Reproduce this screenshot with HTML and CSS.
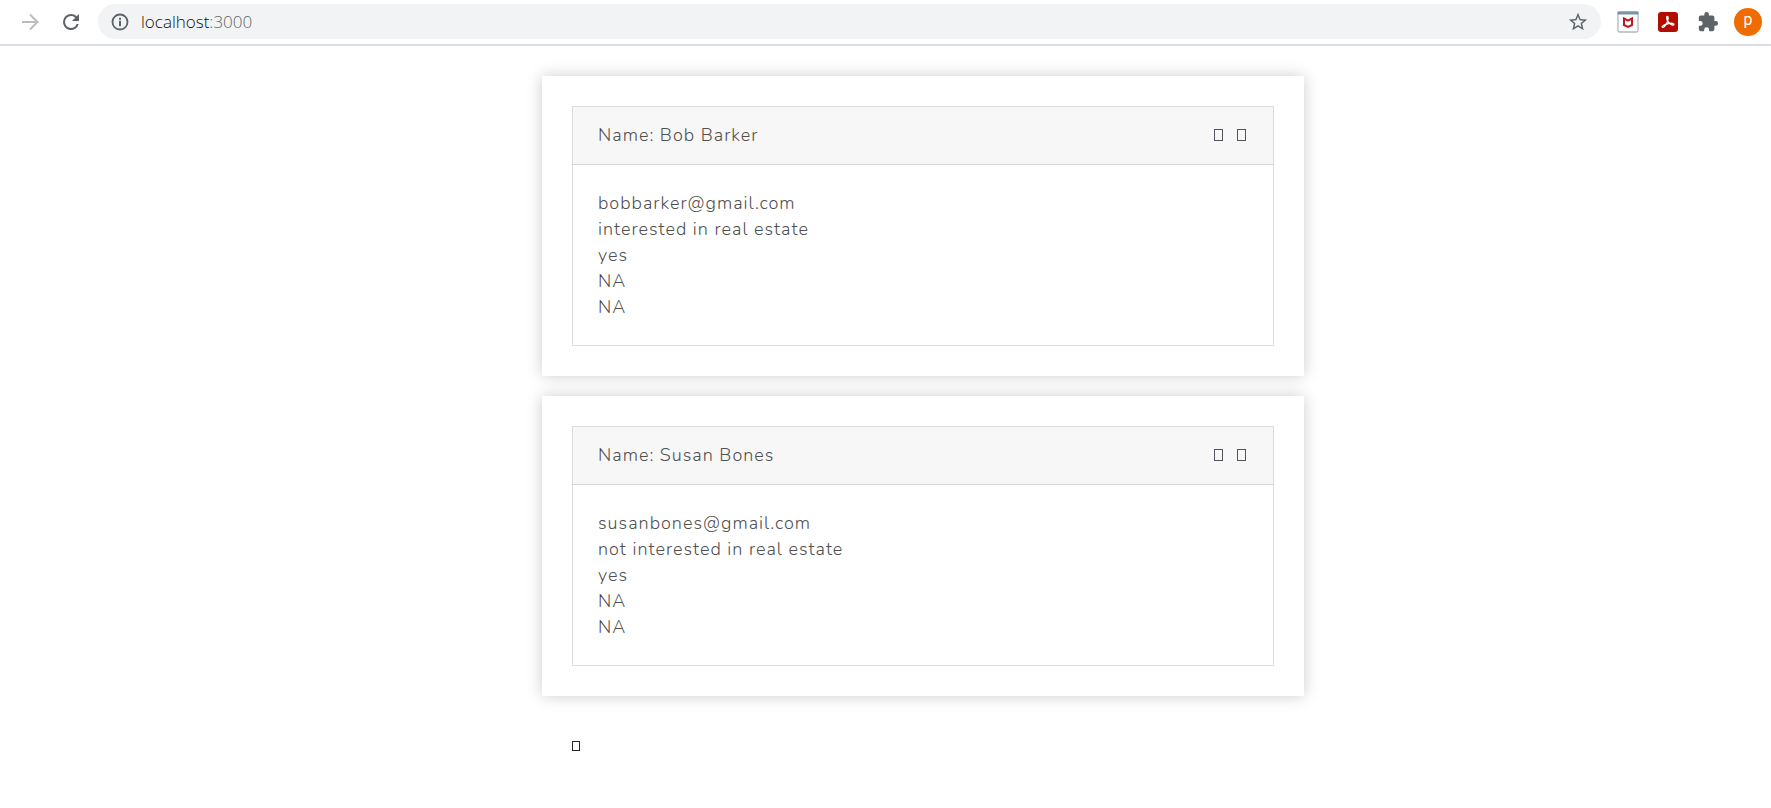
FILE: index.html
```html
<!DOCTYPE html>
<html lang="en">
<head>
<meta charset="utf-8">
<title>localhost:3000</title>
<link rel="stylesheet" href="styles.css">
</head>
<body>
<header class="toolbar">
  <button class="tool forward" type="button" aria-label="Forward"><svg viewBox="0 0 24 24"><path d="M4 12h15.500M12 4.500l7.500 7.500-7.500 7.500" fill="none" stroke="currentColor" stroke-width="2"/></svg></button>
  <button class="tool reload" type="button" aria-label="Reload"><svg viewBox="0 0 24 24"><path fill="currentColor" d="M17.650 6.350A7.960 7.960 0 0 0 12 4a8 8 0 1 0 7.730 10h-2.080A6 6 0 1 1 12 6c1.660 0 3.140.690 4.220 1.780L13 11h7V4z"/></svg></button>
  <div class="address">
    <button class="info" type="button" aria-label="Site information"><svg viewBox="0 0 24 24"><path fill="currentColor" d="M10.800 10.500h2.400v6.500h-2.400zM10.800 6.800h2.400v2.400h-2.400z"/><circle cx="12" cy="12" r="9" fill="none" stroke="currentColor" stroke-width="2.200"/></svg></button>
    <div class="url"><span class="host">localhost</span>:3000</div>
    <button class="star" type="button" aria-label="Bookmark"><svg viewBox="0 0 24 24"><path fill="currentColor" d="M22 9.240l-7.190-.62L12 2 9.190 8.630 2 9.240l5.460 4.730L5.820 21 12 17.270 18.180 21l-1.630-7.030zM12 15.400l-3.760 2.270 1-4.280-3.320-2.880 4.380-.38L12 6.100l1.710 4.040 4.380.38-3.320 2.880 1 4.280z"/></svg></button>
  </div>
  <div class="extensions">
    <button class="ext" type="button" aria-label="McAfee"><svg viewBox="0 0 22 22"><rect x="1" y="1" width="20" height="20" rx="1.500" fill="#fff" stroke="#b4b8bb" stroke-width="1.300"/><path d="M.5.500h21v3H.5z" fill="#7897a6"/><path d="M7 7.500v6.500l4 1.900 4-1.900V7.500l-4 2.200z" fill="none" stroke="#c01820" stroke-width="2"/></svg></button>
    <button class="ext" type="button" aria-label="Adobe Acrobat"><svg viewBox="0 0 22 22"><rect x="1" y="1" width="20" height="20" rx="3" fill="#b30b00"/><path d="M10.300 5.500c1.500 0 .8 4.200-.6 6.700-1.300 2.500-3.300 4.500-4.300 4-1.200-.8 2.600-3.100 6.200-3.700 3.200-.6 5.500 0 5.300 1.100-.4 1.500-4-.5-5.600-2.600-1.600-2-2.200-5.500-1-5.500z" fill="none" stroke="#fff" stroke-width="1.300"/></svg></button>
    <button class="ext" type="button" aria-label="Extensions"><svg viewBox="0 0 24 24"><path fill="#5f6368" d="M20.500 11H19V7a2 2 0 0 0-2-2h-4V3.500a2.500 2.500 0 0 0-5 0V5H4a2 2 0 0 0-2 2v3.800h1.500a2.700 2.700 0 0 1 0 5.400H2V20a2 2 0 0 0 2 2h3.800v-1.500a2.700 2.700 0 0 1 5.400 0V22H17a2 2 0 0 0 2-2v-4h1.500a2.500 2.500 0 0 0 0-5z"/></svg></button>
  </div>
  <button class="avatar" type="button" aria-label="Profile">p</button>
</header>
<main class="contacts">
  <article class="card">
    <div class="panel">
      <header class="panel-head"><span>Name: Bob Barker</span>
        <span class="actions"><button class="glyph" type="button" aria-label="Edit"></button><button class="glyph" type="button" aria-label="Delete"></button></span></header>
      <div class="panel-body"><div>bobbarker@gmail.com</div><div>interested in real estate</div><div>yes</div><div>NA</div><div>NA</div></div>
    </div>
  </article>
  <article class="card">
    <div class="panel">
      <header class="panel-head"><span>Name: Susan Bones</span>
        <span class="actions"><button class="glyph" type="button" aria-label="Edit"></button><button class="glyph" type="button" aria-label="Delete"></button></span></header>
      <div class="panel-body"><div>susanbones@gmail.com</div><div>not interested in real estate</div><div>yes</div><div>NA</div><div>NA</div></div>
    </div>
  </article>
  <footer class="more"><button class="glyph dark" type="button" aria-label="Add"></button></footer>
</main>
</body>
</html>
```
FILE: styles.css
```css
* { box-sizing: border-box; }
body { margin: 0; background: #fff; color: #505050; font-family: "Nunito", "Lato", sans-serif; font-size: 18px; font-weight: 350; line-height: 26px; }
button { border: 0; padding: 0; background: none; color: inherit; font: inherit; display: block; }
svg { display: block; width: 100%; height: 100%; }
.toolbar { display: flex; align-items: center; padding: 4px 9px 5px 18px; border-bottom: 2px solid #dadce3; color: #5f6368; }
.tool { width: 24px; height: 24px; flex: none; }
.forward { color: #babcbe; }
.reload { margin: 0 15px 0 17px; }
.address { flex: 1; height: 35px; display: flex; align-items: center; padding: 0 12px; border-radius: 18px; background: #f1f3f4; }
.info { width: 20px; height: 20px; }
.url { flex: 1; padding-left: 11px; font-family: "Open Sans", sans-serif; font-size: 17px; font-weight: 350; color: #5f6368; }
.host { color: #111; }
.star { width: 22px; height: 22px; }
.extensions { display: flex; align-items: center; gap: 18px; padding: 0 15px 0 16px; }
.ext { width: 22px; height: 22px; }
.avatar { width: 28px; height: 28px; border-radius: 50%; background: #ef6c00; color: #fff; font-family: Roboto, sans-serif; font-size: 16px; font-weight: 400; line-height: 24px; padding-bottom: 3px; text-align: center; }
.contacts { width: 100%; max-width: 837px; margin: 30px auto 0; padding-left: 75px; display: grid; gap: 20px; }
.card { padding: 30px; background: #fff; box-shadow: 0 0 15px rgba(0, 0, 0, .2); }
.panel { border: 1px solid #dcdcdc; letter-spacing: 1px; }
.panel-head { display: flex; justify-content: space-between; align-items: center; padding: 15px 25px 16px; background: #f7f7f7; border-bottom: 1px solid #d4d4d4; }
.actions { display: flex; gap: 14px; padding-right: 2px; }
.panel-body { padding: 25px; }
.glyph { width: 9px; height: 12px; border: 1px solid #505560; }
.more { padding: 25px 30px; }
.dark { width: 8px; height: 10px; border-color: #212529; }
```
